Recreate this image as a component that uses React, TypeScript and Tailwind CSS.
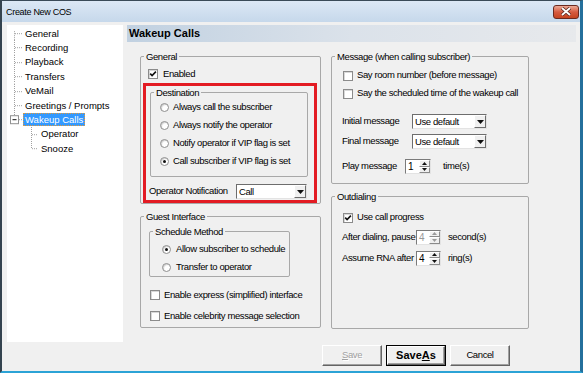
import React from "react";

const UI = "font-['Liberation_Sans',Arial,sans-serif] text-[9.5px] tracking-[-0.4px] text-black whitespace-nowrap";

function Check({ checked }: { checked?: boolean }) {
  return (
    <span className="relative inline-flex w-[10px] h-[10px] shrink-0 border border-[#8b8b8b] bg-white shadow-[inset_1px_1px_0_#d8d8d8]">
      {checked && (
        <svg width="8" height="8" viewBox="0 0 8 8" className="absolute left-0 top-0">
          <path d="M1.2 3.6 L3.1 5.6 L6.9 1.6" stroke="#111" strokeWidth="1.6" fill="none" />
        </svg>
      )}
    </span>
  );
}

function Radio({ checked }: { checked?: boolean }) {
  return (
    <span className="relative inline-flex w-[9px] h-[9px] shrink-0 rounded-full border border-[#8e8e8e] bg-white shadow-[inset_1px_1px_1px_#cfcfcf] items-center justify-center">
      {checked && <span className="w-[3px] h-[3px] rounded-full bg-[#111]" />}
    </span>
  );
}

function Group({
  label,
  className,
  children,
}: {
  label: string;
  className?: string;
  children?: React.ReactNode;
}) {
  return (
    <fieldset className={`border border-[#a8a8a8] rounded-[2px] ${className ?? ""}`}>
      <legend className="ml-[3px] px-[2px] h-[13px] leading-[13px]">{label}</legend>
      {children}
    </fieldset>
  );
}

function Select({ value, w }: { value: string; w: string }) {
  return (
    <div className={`flex h-[15px] ${w} border border-t-[#6d6d6d] border-l-[#6d6d6d] border-b-[#e3e3e3] border-r-[#e3e3e3] bg-white`}>
      <span className="flex-1 pl-[2px] leading-[13px]">{value}</span>
      <span className="w-[12px] h-[13px] flex items-center justify-center bg-[#f0f0f0] border border-t-white border-l-white border-b-[#6d6d6d] border-r-[#6d6d6d]">
        <svg width="7" height="4" viewBox="0 0 7 4">
          <path d="M0 0 H7 L3.5 4 Z" fill="#111" />
        </svg>
      </span>
    </div>
  );
}

function Spinner({ value, w, disabled }: { value: string; w: string; disabled?: boolean }) {
  const c = disabled ? "#9a9a9a" : "#111";
  return (
    <div className={`flex h-[15px] ${w} border border-t-[#7a7a7a] border-l-[#7a7a7a] border-b-[#e3e3e3] border-r-[#e3e3e3] bg-white`}>
      <span className={`flex-1 pl-[2px] leading-[13px] text-[10px] ${disabled ? "text-[#9a9a9a]" : ""}`}>{value}</span>
      <span className="w-[11px] flex flex-col bg-[#f0f0f0]">
        <span className="flex-1 flex items-center justify-center border border-t-white border-l-white border-b-[#8a8a8a] border-r-[#8a8a8a]">
          <svg width="5" height="3" viewBox="0 0 5 3">
            <path d="M0 3 H5 L2.5 0 Z" fill={c} />
          </svg>
        </span>
        <span className="flex-1 flex items-center justify-center border border-t-white border-l-white border-b-[#8a8a8a] border-r-[#8a8a8a]">
          <svg width="5" height="3" viewBox="0 0 5 3">
            <path d="M0 0 H5 L2.5 3 Z" fill={c} />
          </svg>
        </span>
      </span>
    </div>
  );
}

type TreeRow = { label: string; level: 0 | 1; kind: "first" | "mid" | "parent" | "last"; selected?: boolean };

const treeRows: TreeRow[] = [
  { label: "General", level: 0, kind: "first" },
  { label: "Recording", level: 0, kind: "mid" },
  { label: "Playback", level: 0, kind: "mid" },
  { label: "Transfers", level: 0, kind: "mid" },
  { label: "VeMail", level: 0, kind: "mid" },
  { label: "Greetings / Prompts", level: 0, kind: "mid" },
  { label: "Wakeup Calls", level: 0, kind: "parent", selected: true },
  { label: "Operator", level: 1, kind: "mid" },
  { label: "Snooze", level: 1, kind: "last" },
];

function Connector({ row }: { row: TreeRow }) {
  const h = 14.4;
  const m = 7.2;
  const dash = { stroke: "#a0a0a0", strokeWidth: 1, strokeDasharray: "1 1" };
  if (row.level === 0) {
    return (
      <svg width="16" height={h} className="shrink-0">
        {row.kind === "first" && <line x1="7.5" y1={m - 2} x2="7.5" y2={h} {...dash} />}
        {row.kind === "mid" && <line x1="7.5" y1="0" x2="7.5" y2={h} {...dash} />}
        {row.kind !== "parent" && <line x1="8" y1={m + 0.5} x2="15" y2={m + 0.5} {...dash} />}
        {row.kind === "parent" && (
          <>
            <line x1="7.5" y1="0" x2="7.5" y2={m - 4} {...dash} />
            <rect x="3.5" y={m - 3.5} width="8" height="8" fill="white" stroke="#919191" />
            <line x1="5.5" y1={m + 0.5} x2="9.5" y2={m + 0.5} stroke="#111" />
            <line x1="12" y1={m + 0.5} x2="15" y2={m + 0.5} {...dash} />
          </>
        )}
      </svg>
    );
  }
  return (
    <svg width="32" height={h} className="shrink-0">
      <line x1="24.5" y1="0" x2="24.5" y2={row.kind === "last" ? m + 0.5 : h} {...dash} />
      <line x1="25" y1={m + 0.5} x2="31" y2={m + 0.5} {...dash} />
    </svg>
  );
}

function Button({ children, def, disabled }: { children: React.ReactNode; def?: boolean; disabled?: boolean }) {
  return (
    <div className={`w-[60px] h-[21px] ${def ? "border border-black" : ""}`}>
      <div
        className={`h-full w-full flex items-center justify-center bg-[#f0f0f0] border border-t-white border-l-white border-b-[#646464] border-r-[#646464] shadow-[inset_-1px_-1px_0_#a0a0a0] ${
          disabled ? "text-[#a0a0a0] [text-shadow:1px_1px_0_#fff]" : ""
        } ${def ? "font-bold text-[11px] tracking-[0px]" : ""}`}
      >
        {children}
      </div>
    </div>
  );
}

export default function App() {
  return (
    <div
      className={`w-[583px] h-[373px] flex flex-col bg-[#f0f0f0] border-t border-t-[#3a4a58] border-l-[2px] border-l-[#34434f] border-r-[3px] border-r-[#24709c] border-b-[2px] border-b-[#2ca3d6] overflow-hidden ${UI}`}
    >
      {/* Title bar */}
      <div className="h-[21px] shrink-0 flex items-center justify-between pl-[4px] pr-[1px] bg-gradient-to-b from-[#dce8f5] to-[#c6d8eb]">
        <span className="leading-[12px] text-[9px] tracking-[-0.3px]">Create New COS</span>
        <div className="w-[26px] h-[14px] rounded-[3px] border border-[#6b2a20] bg-gradient-to-b from-[#eba996] via-[#d65a3f] to-[#c5441f] flex items-center justify-center">
          <svg width="12" height="9" viewBox="0 0 12 9">
            <path d="M2 1 L10 8 M10 1 L2 8" stroke="#5a2820" strokeWidth="3.4" />
            <path d="M2 1 L10 8 M10 1 L2 8" stroke="#fff" strokeWidth="1.8" />
          </svg>
        </div>
      </div>

      {/* Body */}
      <div className="flex flex-1">
        {/* Tree */}
        <div className="ml-[5px] mt-[3px] w-[116px] h-[317px] bg-white pt-[1px] text-[9.5px] tracking-[0px]">
          {treeRows.map((r) => (
            <div key={r.label} className="flex items-center h-[14.4px]">
              <Connector row={r} />
              <span
                className={`h-[13px] leading-[11px] px-[1px] border ${
                  r.selected ? "bg-[#3399ff] text-white border-dotted border-[#e09a3c]" : "border-transparent"
                }`}
              >
                {r.label}
              </span>
            </div>
          ))}
        </div>

        {/* Right panel */}
        <div className="ml-[4px] mt-[3px] w-[449px] flex flex-col">
          <div className="h-[17px] pl-[2px] flex items-center bg-gradient-to-r from-[#c1d1e1] via-[#dbe2ea] to-[#e7e9ec] font-bold text-[11px] tracking-[0px]">
            Wakeup Calls
          </div>

          <div className="mt-[8px] ml-[13px] flex gap-[10px]">
            {/* Left column */}
            <div className="w-[181px] flex flex-col">
              <Group label="General" className="w-[181px]">
                <div className="mt-[4px] h-[14px] pl-[7px] flex items-center gap-[5px]">
                  <Check checked />
                  <span>Enabled</span>
                </div>
                <div className="ml-[2px] mt-[2px] w-[174px] border-[3px] border-[#e31b23]">
                  <Group label="Destination" className="ml-[4px] w-[158px]">
                    <div className="flex flex-col gap-[4px] pt-[1px] pl-[9px] pb-[8px]">
                      {[
                        "Always call the subscriber",
                        "Always notify the operator",
                        "Notify operator if VIP flag is set",
                        "Call subscriber if VIP flag is set",
                      ].map((t, i) => (
                        <div key={t} className="h-[14px] flex items-center gap-[4px]">
                          <Radio checked={i === 3} />
                          <span>{t}</span>
                        </div>
                      ))}
                    </div>
                  </Group>
                  <div className="mt-[6.5px] h-[16px] flex items-center pl-[3px]">
                    <span className="w-[87px]">Operator Notification</span>
                    <Select value="Call" w="w-[71px]" />
                  </div>
                </div>
              </Group>

              <Group label="Guest Interface" className="mt-[6px] w-[181px]">
                <Group label="Schedule Method" className="mt-[2px] ml-[8px] w-[141px]">
                  <div className="mt-[4.5px] flex flex-col gap-[4px] pl-[12px] pb-[2px]">
                    <div className="h-[14px] flex items-center gap-[5px]">
                      <Radio checked />
                      <span>Allow subscriber to schedule</span>
                    </div>
                    <div className="h-[14px] flex items-center gap-[5px]">
                      <Radio />
                      <span>Transfer to operator</span>
                    </div>
                  </div>
                </Group>
                <div className="mt-[11px] flex flex-col gap-[7px] pl-[9px] pb-[4px]">
                  <div className="h-[14px] flex items-center gap-[4px]">
                    <Check />
                    <span>Enable express (simplified) interface</span>
                  </div>
                  <div className="h-[14px] flex items-center gap-[4px]">
                    <Check />
                    <span>Enable celebrity message selection</span>
                  </div>
                </div>
              </Group>
            </div>

            {/* Right column */}
            <div className="w-[198px] flex flex-col">
              <Group label="Message (when calling subscriber)" className="w-[198px]">
                <div className="mt-[5.5px] flex flex-col gap-[4px] pl-[11px]">
                  <div className="h-[14px] flex items-center gap-[4px]">
                    <Check />
                    <span>Say room number (before message)</span>
                  </div>
                  <div className="h-[14px] flex items-center gap-[4px]">
                    <Check />
                    <span>Say the scheduled time of the wakeup call</span>
                  </div>
                </div>
                <div className="mt-[13.5px] h-[15px] flex items-center pl-[10px]">
                  <span className="w-[70px]">Initial message</span>
                  <Select value="Use default" w="w-[75px]" />
                </div>
                <div className="mt-[5px] h-[15px] flex items-center pl-[10px]">
                  <span className="w-[70px]">Final message</span>
                  <Select value="Use default" w="w-[75px]" />
                </div>
                <div className="mt-[10px] h-[15px] flex items-center pl-[10px] mb-[9px]">
                  <span className="w-[63px]">Play message</span>
                  <Spinner value="1" w="w-[26px]" />
                  <span className="ml-[12px]">time(s)</span>
                </div>
              </Group>

              <Group label="Outdialing" className="mt-[6px] w-[198px]">
                <div className="h-[125px] flex flex-col">
                  <div className="mt-[7.5px] h-[14px] pl-[11px] flex items-center gap-[4px]">
                    <Check checked />
                    <span>Use call progress</span>
                  </div>
                  <div className="mt-[5px] h-[15px] flex items-center pl-[10px]">
                    <span className="w-[74px]">After dialing, pause</span>
                    <Spinner value="4" w="w-[25px]" disabled />
                    <span className="ml-[7px]">second(s)</span>
                  </div>
                  <div className="mt-[6px] h-[15px] flex items-center pl-[10px]">
                    <span className="w-[74px]">Assume RNA after</span>
                    <Spinner value="4" w="w-[25px]" />
                    <span className="ml-[7px]">ring(s)</span>
                  </div>
                </div>
              </Group>
            </div>
          </div>

          {/* Buttons */}
          <div className="mt-[16px] ml-[195px] flex gap-[4px]">
            <Button disabled>
              <span>
                <span className="underline">S</span>ave
              </span>
            </Button>
            <Button def>
              <span>
                Save<span className="underline">A</span>s
              </span>
            </Button>
            <Button>Cancel</Button>
          </div>
        </div>
      </div>
    </div>
  );
}
